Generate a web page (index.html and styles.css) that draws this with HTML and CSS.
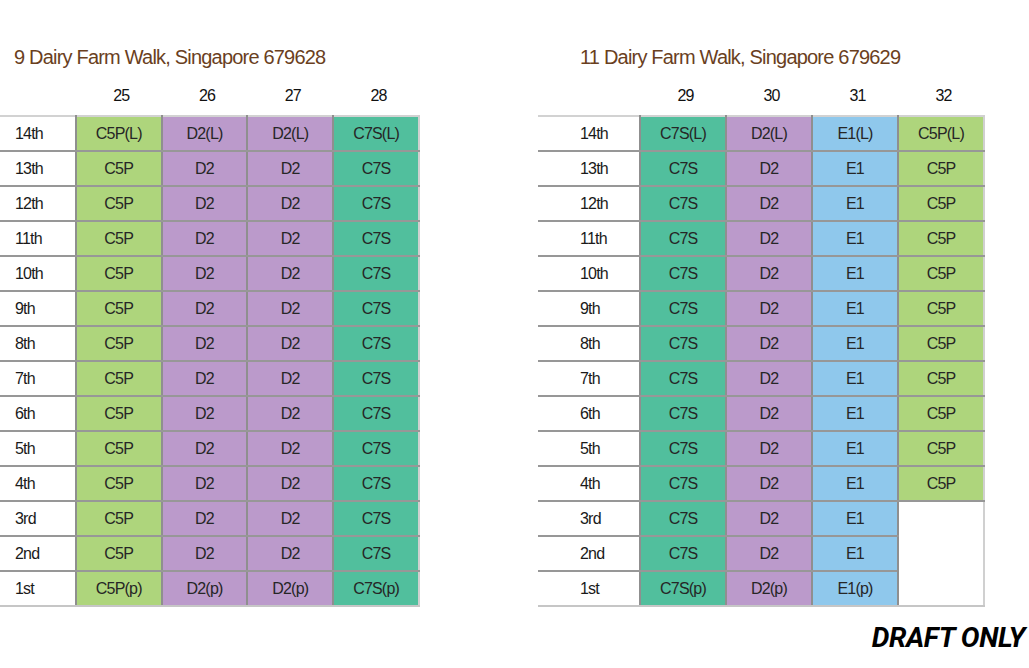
FILE: index.html
```html
<!DOCTYPE html>
<html>
<head>
<meta charset="utf-8">
<link rel="stylesheet" href="styles.css">
</head>
<body>
<div class="page">
  <div class="blocks">
    <section class="block block-left">
      <h2 class="title title-left">9 Dairy Farm Walk, Singapore 679628</h2>
      <table class="grid grid-left">
        <colgroup><col class="c-label-l"><col class="c-unit"><col class="c-unit"><col class="c-unit"><col class="c-unit"></colgroup>
        <thead><tr><th></th><th>25</th><th>26</th><th>27</th><th>28</th></tr></thead>
        <tbody>
          <tr class="first"><td class="lbl">14th</td><td class="g">C5P(L)</td><td class="p">D2(L)</td><td class="p">D2(L)</td><td class="t">C7S(L)</td></tr>
          <tr><td class="lbl">13th</td><td class="g">C5P</td><td class="p">D2</td><td class="p">D2</td><td class="t">C7S</td></tr>
          <tr><td class="lbl">12th</td><td class="g">C5P</td><td class="p">D2</td><td class="p">D2</td><td class="t">C7S</td></tr>
          <tr><td class="lbl">11th</td><td class="g">C5P</td><td class="p">D2</td><td class="p">D2</td><td class="t">C7S</td></tr>
          <tr><td class="lbl">10th</td><td class="g">C5P</td><td class="p">D2</td><td class="p">D2</td><td class="t">C7S</td></tr>
          <tr><td class="lbl">9th</td><td class="g">C5P</td><td class="p">D2</td><td class="p">D2</td><td class="t">C7S</td></tr>
          <tr><td class="lbl">8th</td><td class="g">C5P</td><td class="p">D2</td><td class="p">D2</td><td class="t">C7S</td></tr>
          <tr><td class="lbl">7th</td><td class="g">C5P</td><td class="p">D2</td><td class="p">D2</td><td class="t">C7S</td></tr>
          <tr><td class="lbl">6th</td><td class="g">C5P</td><td class="p">D2</td><td class="p">D2</td><td class="t">C7S</td></tr>
          <tr><td class="lbl">5th</td><td class="g">C5P</td><td class="p">D2</td><td class="p">D2</td><td class="t">C7S</td></tr>
          <tr><td class="lbl">4th</td><td class="g">C5P</td><td class="p">D2</td><td class="p">D2</td><td class="t">C7S</td></tr>
          <tr><td class="lbl">3rd</td><td class="g">C5P</td><td class="p">D2</td><td class="p">D2</td><td class="t">C7S</td></tr>
          <tr><td class="lbl">2nd</td><td class="g">C5P</td><td class="p">D2</td><td class="p">D2</td><td class="t">C7S</td></tr>
          <tr class="last"><td class="lbl">1st</td><td class="g">C5P(p)</td><td class="p">D2(p)</td><td class="p">D2(p)</td><td class="t">C7S(p)</td></tr>
        </tbody>
      </table>
    </section>
    <section class="block block-right">
      <h2 class="title title-right">11 Dairy Farm Walk, Singapore 679629</h2>
      <table class="grid grid-right">
        <colgroup><col class="c-label-r"><col class="c-unit"><col class="c-unit"><col class="c-unit"><col class="c-unit"></colgroup>
        <thead><tr><th></th><th>29</th><th>30</th><th>31</th><th>32</th></tr></thead>
        <tbody>
          <tr class="first"><td class="lbl">14th</td><td class="t">C7S(L)</td><td class="p">D2(L)</td><td class="b">E1(L)</td><td class="g">C5P(L)</td></tr>
          <tr><td class="lbl">13th</td><td class="t">C7S</td><td class="p">D2</td><td class="b">E1</td><td class="g">C5P</td></tr>
          <tr><td class="lbl">12th</td><td class="t">C7S</td><td class="p">D2</td><td class="b">E1</td><td class="g">C5P</td></tr>
          <tr><td class="lbl">11th</td><td class="t">C7S</td><td class="p">D2</td><td class="b">E1</td><td class="g">C5P</td></tr>
          <tr><td class="lbl">10th</td><td class="t">C7S</td><td class="p">D2</td><td class="b">E1</td><td class="g">C5P</td></tr>
          <tr><td class="lbl">9th</td><td class="t">C7S</td><td class="p">D2</td><td class="b">E1</td><td class="g">C5P</td></tr>
          <tr><td class="lbl">8th</td><td class="t">C7S</td><td class="p">D2</td><td class="b">E1</td><td class="g">C5P</td></tr>
          <tr><td class="lbl">7th</td><td class="t">C7S</td><td class="p">D2</td><td class="b">E1</td><td class="g">C5P</td></tr>
          <tr><td class="lbl">6th</td><td class="t">C7S</td><td class="p">D2</td><td class="b">E1</td><td class="g">C5P</td></tr>
          <tr><td class="lbl">5th</td><td class="t">C7S</td><td class="p">D2</td><td class="b">E1</td><td class="g">C5P</td></tr>
          <tr><td class="lbl">4th</td><td class="t">C7S</td><td class="p">D2</td><td class="b">E1</td><td class="g">C5P</td></tr>
          <tr><td class="lbl">3rd</td><td class="t">C7S</td><td class="p">D2</td><td class="b">E1</td><td class="empty" rowspan="3"></td></tr>
          <tr><td class="lbl">2nd</td><td class="t">C7S</td><td class="p">D2</td><td class="b">E1</td></tr>
          <tr class="last"><td class="lbl">1st</td><td class="t">C7S(p)</td><td class="p">D2(p)</td><td class="b">E1(p)</td></tr>
        </tbody>
      </table>
    </section>
  </div>
  <div class="draft">DRAFT ONLY</div>
</div>
</body>
</html>
```

FILE: styles.css
```css
html, body {
  margin: 0;
  padding: 0;
  background: #ffffff;
}

.page {
  display: flex;
  flex-direction: column;
  padding: 44px 4px 0 0;
  width: 1029px;
  box-sizing: border-box;
}

.blocks {
  display: flex;
  gap: 118px;
}

.block-left { width: 420px; }
.block-right { width: 447px; }

.title {
  margin: 0;
  font-family: "Liberation Sans", Arial, sans-serif;
  font-weight: normal;
  font-size: 20px;
  line-height: 26px;
  letter-spacing: -0.8px;
  color: #6a3f1e;
}

.title-left { margin-left: 14px; }
.title-right { margin-left: 42px; }

.grid {
  border-collapse: collapse;
  table-layout: fixed;
  font-family: "Liberation Sans", Arial, sans-serif;
  font-size: 16px;
  letter-spacing: -0.8px;
  color: #262626;
}

.c-label-l { width: 76px; }
.c-label-r { width: 102px; }
.c-unit { width: 86px; }

.grid th {
  height: 46px;
  padding: 6px 0 0 5px;
  box-sizing: border-box;
  font-weight: normal;
  text-align: center;
  vertical-align: middle;
  color: #111111;
}

.grid td {
  height: 33px;
  padding: 0;
  text-align: center;
  vertical-align: middle;
  border-top: 2px solid #979797;
  border-bottom: 2px solid #979797;
  border-left: 2px solid #8f8f8f;
  border-right: 2px solid #8f8f8f;
}

.grid td.lbl {
  border-left: none;
  text-align: left;
  color: #1a1a1a;
  background: #ffffff;
}

.grid-left td.lbl { padding-left: 15px; }
.grid-right td.lbl { padding-left: 42px; }

.grid tr.first td { border-top-color: #d2d2d2; }
.grid tr.last td { border-bottom-color: #c6c6c6; }
.grid tr td:last-child { border-right-color: #d0d0d0; }

.g { background: #aed57c; }
.p { background: #bb9acb; }
.t { background: #51bf9d; }
.b { background: #8fc8ec; }

.grid td.empty {
  background: #ffffff;
  border-bottom-color: #c6c6c6;
  border-right-color: #d6d6d6;
}

.draft {
  align-self: flex-end;
  margin-top: 15px;
  font-family: Roboto, "Liberation Sans", sans-serif;
  font-weight: bold;
  font-style: italic;
  font-size: 28px;
  line-height: 32px;
  letter-spacing: -0.4px;
  color: #000000;
}
```
